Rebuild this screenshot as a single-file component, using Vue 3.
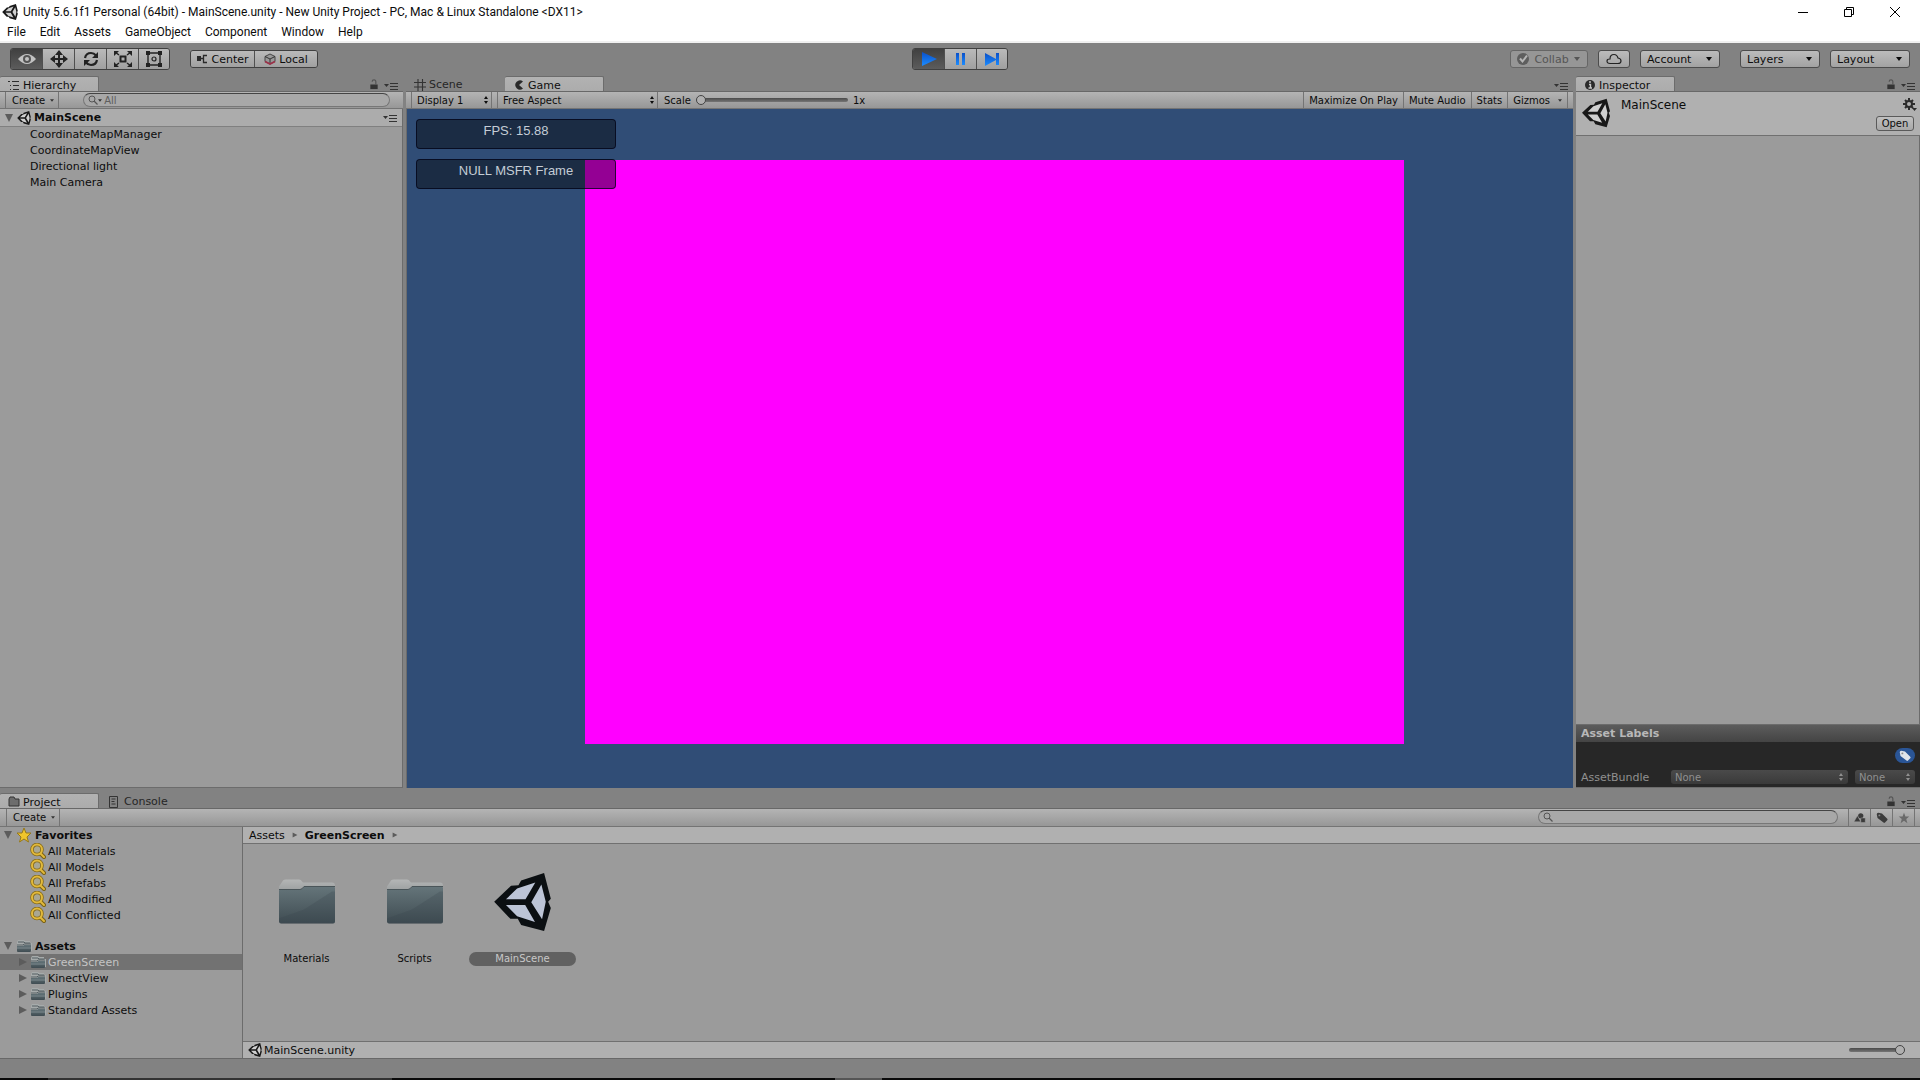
<script setup>
import { ref } from "vue";

const menus = ["File", "Edit", "Assets", "GameObject", "Component", "Window", "Help"];

const tools = [
  { id: "eye", label: "Hand" },
  { id: "move", label: "Move" },
  { id: "rotate", label: "Rotate" },
  { id: "scale", label: "Scale" },
  { id: "rect", label: "Rect" },
];
const activeTool = ref("eye");

const playControls = [
  { id: "play", label: "Play" },
  { id: "pause", label: "Pause" },
  { id: "step", label: "Step" },
];
const playing = ref(true);

const sceneObjects = [
  "CoordinateMapManager",
  "CoordinateMapView",
  "Directional light",
  "Main Camera",
];

const gameToggles = ["Maximize On Play", "Mute Audio", "Stats"];

const favorites = [
  "All Materials",
  "All Models",
  "All Prefabs",
  "All Modified",
  "All Conflicted",
];

const folders = ["GreenScreen", "KinectView", "Plugins", "Standard Assets"];
const selectedFolder = ref("GreenScreen");

const items = [
  { name: "Materials", icon: "folder-big" },
  { name: "Scripts", icon: "folder-big" },
  { name: "MainScene", icon: "unity-big" },
];
const selectedItem = ref("MainScene");

const hierarchySearch = ref("");
const projectSearch = ref("");
const gameScale = ref(0);
const iconSize = ref(100);
</script>

<template>
  <svg class="defs" aria-hidden="true">
    <defs>
      <linearGradient id="g-folder" x1="0" y1="0" x2="0" y2="1">
        <stop offset="0" stop-color="#65757a" />
        <stop offset="1" stop-color="#3f4c52" />
      </linearGradient>
      <linearGradient id="g-back" x1="0" y1="0" x2="0" y2="1">
        <stop offset="0" stop-color="#b4b6b6" />
        <stop offset="1" stop-color="#8b9091" />
      </linearGradient>
      <linearGradient id="g-blue" x1="0" y1="0" x2="0" y2="1">
        <stop offset="0" stop-color="#0b50c8" />
        <stop offset="1" stop-color="#1c8cff" />
      </linearGradient>
    </defs>
    <symbol id="unity" viewBox="0 0 168 172">
      <path d="M0 85 50 38 72 36 80 22 148 0 168 76 160 85 168 104 148 172 80 154 70 136 48 136Z" fill="#181818" />
      <path d="M35 78 68 46 122 28 93 78ZM35 95H92L121 145 68 128ZM110 87 140 34 153 85 142 137Z" fill="#d0d0d0" />
    </symbol>
    <symbol id="unity-big" viewBox="0 0 168 172">
      <path d="M0 85 50 38 72 36 80 22 148 0 168 76 160 85 168 104 148 172 80 154 70 136 48 136Z" fill="#0b0f12" />
      <path d="M35 78 68 46 122 28 93 78ZM35 95H92L121 145 68 128ZM110 87 140 34 153 85 142 137Z" fill="#bcc4d6" />
    </symbol>
    <symbol id="folder-big" viewBox="0 0 57 47">
      <path d="M1 8 5 2Q6 1 8 1H21Q23 1 24 3L25 4H54Q57 4 57 7V20H1Z" fill="url(#g-back)" />
      <path d="M1 12Q1 11 3 11H22Q24 11 26 8H56Q57 8 57 10V43Q57 45 55 45H3Q1 45 1 43Z" fill="url(#g-folder)" />
      <path d="M1 11H22Q24 11 26 8H57" fill="none" stroke="#4a5559" stroke-width="1" />
      <path d="M26 31 54 13H57V43Q57 45 55 45H3L1 43V40Z" fill="#37444a" opacity=".25" />
    </symbol>
    <symbol id="folder" viewBox="0 0 16 14">
      <path d="M1 3 2 1H8L9 2H14V4H16V12H1Z" fill="#a6abab" />
      <path d="M2 3H8L9 4H14M1 6H7L8 5H15" fill="none" stroke="#555f63" stroke-width="1" />
      <path d="M1 7H7L8 6H15V12Q15 13 14 13H2Q1 13 1 12Z" fill="url(#g-folder)" />
      <path d="M1 9H15" stroke="#7d898d" stroke-width="1" />
    </symbol>
    <symbol id="folder-tab" viewBox="0 0 12 12">
      <path d="M1 3 2 1H6L7 3H11V10H1Z" fill="#6d6d6d" stroke="#333" />
    </symbol>
    <symbol id="lens" viewBox="0 0 16 16">
      <path d="M10 10 14 14" stroke="#7a6114" stroke-width="4" stroke-linecap="round" />
      <circle cx="7" cy="6.5" r="5" fill="#a9a793" stroke="#856b1a" stroke-width="3.6" />
      <circle cx="7" cy="6.5" r="5" fill="none" stroke="#e2b93b" stroke-width="2" />
      <path d="M11 11 14 14" stroke="#e2b93b" stroke-width="2" stroke-linecap="round" />
    </symbol>
    <symbol id="star" viewBox="0 0 16 16">
      <path d="M8 1 10 6 15 6 11 10 12.5 15 8 12 3.5 15 5 10 1 6 6 6Z" fill="#f0c52c" stroke="#96781a" stroke-width="1" />
    </symbol>
    <symbol id="star-flat" viewBox="0 0 16 16">
      <path d="M8 1 9.900 6H15L11 9.400 12.500 15 8 11.700 3.500 15 5 9.400 1 6H6.100Z" fill="#6a6a6a" />
    </symbol>
    <symbol id="shapes" viewBox="0 0 16 16">
      <circle cx="9" cy="5" r="3.5" fill="#3b3b3b" />
      <path d="M0 13 4.500 5 9 13ZM9 8H15V14H9Z" fill="#3b3b3b" stroke="#a5a5a5" stroke-width=".6" />
    </symbol>
    <symbol id="tag" viewBox="0 0 16 16">
      <path d="M1 3Q1 1 3 1L8 2 15 9Q16 10 15 11L12 14Q11 15 10 14L2 8Z" fill="currentColor" />
      <circle cx="4.5" cy="4.500" r="1.300" fill="#888" />
    </symbol>
    <symbol id="lock" viewBox="0 0 10 12">
      <path d="M1 6H9V11H1Z" fill="#333" />
      <path d="M7 6V3Q7 1 5 1Q3 1 3 3" fill="none" stroke="#555" stroke-width="1.3" />
    </symbol>
    <symbol id="options" viewBox="0 0 14 8">
      <path d="M0 2H5L2.500 5Z" fill="#333" />
      <path d="M6 1.500H14M6 4.500H14M6 7.500H14" stroke="#333" stroke-width="1" />
    </symbol>
    <symbol id="list" viewBox="0 0 12 12">
      <path d="M0 2.500H2M4 2.500H11M2 6.500H3M5 6.500H11M2 10.500H3M5 10.500H11" stroke="#2c2c2c" stroke-width="1.2" />
    </symbol>
    <symbol id="grid" viewBox="0 0 12 12">
      <path d="M4 0V12M8.500 0V12M0 3.500H12M0 8H12" stroke="#333" stroke-width="1.1" />
    </symbol>
    <symbol id="pac" viewBox="0 0 12 12">
      <path d="M10 2.500A4.600 4.600 0 1 0 10 9.500L6 6Z" fill="#2a2a2a" />
    </symbol>
    <symbol id="info" viewBox="0 0 12 12">
      <circle cx="6" cy="6" r="5" fill="#2a2a2a" />
      <path d="M6 2V4M5 5.500H6.500V9M4.500 9H8" fill="none" stroke="#c8c8c8" stroke-width="1.4" />
    </symbol>
    <symbol id="console" viewBox="0 0 12 12">
      <path d="M.5 .5H8.500V11.500H.5Z" fill="none" stroke="#333" />
      <path d="M2.500 3H6.500M2.500 5.500H5.500M2.500 8H6.500" stroke="#333" />
    </symbol>
    <symbol id="gear" viewBox="0 0 14 14">
      <circle cx="6" cy="6" r="3" fill="none" stroke="#2c2c2c" stroke-width="2" />
      <path d="M6 0V3M6 9V12M0 6H3M9 6H12M2 2 4 4M8 8 10 10M10 2 8 4M2 10 4 8" stroke="#2c2c2c" stroke-width="2" />
      <path d="M9 10H14L11.500 13Z" fill="#2c2c2c" />
    </symbol>
    <symbol id="eye" viewBox="0 0 20 18">
      <path d="M1 9Q10 -1 19 9Q10 19 1 9Z" fill="#c2c2c2" />
      <circle cx="10" cy="9" r="4" fill="#555" />
      <circle cx="10" cy="9" r="2" fill="#c2c2c2" />
    </symbol>
    <symbol id="move" viewBox="0 0 20 18">
      <path d="M10 1V17M2 9H18" stroke="#222" stroke-width="2" />
      <path d="M10 0 14 5H6ZM10 18 6 13H14ZM1 9 6 5V13ZM19 9 14 13V5Z" fill="#222" />
    </symbol>
    <symbol id="rotate" viewBox="0 0 20 18">
      <path d="M4 8Q5 3 10 3Q13 3 15 5.500M16 10Q15 15 10 15Q7 15 5 12.500" fill="none" stroke="#222" stroke-width="2.2" />
      <path d="M17 2V8H11ZM3 16V10H9Z" fill="#222" />
    </symbol>
    <symbol id="scale" viewBox="0 0 20 18">
      <path d="M7.500 6.500H12.500V11.500H7.500Z" fill="none" stroke="#222" stroke-width="2" />
      <path d="M2 2 6 5M18 2 14 5M2 16 6 13M18 16 14 13" stroke="#222" stroke-width="1.5" />
      <path d="M1 1H6L1 6ZM19 1V6L14 1ZM1 17V12L6 17ZM19 17H14L19 12Z" fill="#222" />
    </symbol>
    <symbol id="rect" viewBox="0 0 20 18">
      <path d="M4 3H16V15H4Z" fill="none" stroke="#222" stroke-width="1.4" />
      <path d="M2 1H6V5H2ZM14 1H18V5H14ZM2 13H6V17H2ZM14 13H18V17H14Z" fill="#222" />
      <circle cx="10" cy="9" r="2" fill="none" stroke="#222" stroke-width="1.2" />
    </symbol>
    <symbol id="pivot" viewBox="0 0 12 12">
      <path d="M1 3H5V8H1Z" fill="#2a2a2a" />
      <path d="M5 5.500H8M11 2.500H7.500V9.500H11" fill="none" stroke="#2a2a2a" stroke-width="1.3" />
    </symbol>
    <symbol id="cube" viewBox="0 0 12 12">
      <path d="M6 1 11 3.500V8.500L6 11 1 8.500V3.500Z" fill="#999" stroke="#444" />
      <path d="M1 3.500 6 6 11 3.500M6 6V11" fill="none" stroke="#333" />
      <path d="M1 8.500 6 11 11 8.500" fill="none" stroke="#9c3048" stroke-width="1.8" />
    </symbol>
    <symbol id="play" viewBox="0 0 20 18">
      <path d="M3 2 18 9 3 16Z" fill="url(#g-blue)" />
    </symbol>
    <symbol id="pause" viewBox="0 0 20 18">
      <path d="M5 3H8V15H5ZM11 3H14V15H11Z" fill="url(#g-blue)" />
    </symbol>
    <symbol id="step" viewBox="0 0 20 18">
      <path d="M3 3 14 9V3H17V15H14V10L3 16Z" fill="url(#g-blue)" />
    </symbol>
    <symbol id="cloud" viewBox="0 0 16 12">
      <path d="M4 10.500Q1 10.500 1 8Q1 6 4 6Q4 1.500 8 1.500Q11 1.500 12 5Q15 5.500 15 8Q15 10.500 12 10.500Z" fill="none" stroke="#222" stroke-width="1.2" />
    </symbol>
    <symbol id="check" viewBox="0 0 12 12">
      <circle cx="6" cy="6" r="6" fill="#5e5e5e" />
      <path d="M3 5.500 5.500 8.500 10 2.500" fill="none" stroke="#b5b5b5" stroke-width="2" />
    </symbol>
    <symbol id="search" viewBox="0 0 10 10">
      <circle cx="4" cy="4" r="3" fill="none" stroke="#555" />
      <path d="M6 6 9.500 9.500" stroke="#555" stroke-width="1.3" />
    </symbol>
    <symbol id="down" viewBox="0 0 6 4">
      <path d="M0 0H6L3 4Z" fill="currentColor" />
    </symbol>
    <symbol id="updown" viewBox="0 0 6 8">
      <path d="M1 3H5L3 0ZM1 5H5L3 8Z" fill="currentColor" />
    </symbol>
    <symbol id="fold-open" viewBox="0 0 10 10">
      <path d="M1 1H9L5 9Z" fill="#5c5c5c" />
    </symbol>
    <symbol id="fold-closed" viewBox="0 0 10 10">
      <path d="M1 1V9L9 5Z" fill="#5c5c5c" />
    </symbol>
  </svg>

  <div class="editor">
    <header class="titlebar">
      <svg class="i16"><use href="#unity" /></svg>
      <h1>Unity 5.6.1f1 Personal (64bit) - MainScene.unity - New Unity Project - PC, Mac &amp; Linux Standalone &lt;DX11&gt;</h1>
      <div class="window-btns">
        <button aria-label="Minimize">
          <svg class="i12" viewBox="0 0 12 12"><path d="M1 6.500H11" stroke="#000" /></svg>
        </button>
        <button aria-label="Restore">
          <svg class="i12" viewBox="0 0 12 12"><path d="M1.500 3.500H8.500V10.500H1.500ZM3.500 3V1.500H10.500V8.500H9" fill="none" stroke="#000" /></svg>
        </button>
        <button aria-label="Close">
          <svg class="i12" viewBox="0 0 12 12"><path d="M1 1 11 11M11 1 1 11" stroke="#000" /></svg>
        </button>
      </div>
    </header>

    <nav class="menubar">
      <button v-for="menu in menus" :key="menu">{{ menu }}</button>
    </nav>

    <div class="toolbar">
      <div class="side">
        <div class="group tall">
          <button
            v-for="tool in tools"
            :key="tool.id"
            :aria-label="tool.label"
            :class="{ on: activeTool === tool.id }"
            @click="activeTool = tool.id"
          >
            <svg class="tool-icon"><use :href="'#' + tool.id" /></svg>
          </button>
        </div>
        <div class="group">
          <button><svg class="i12"><use href="#pivot" /></svg>Center</button>
          <button><svg class="i12"><use href="#cube" /></svg>Local</button>
        </div>
      </div>
      <div class="group tall">
        <button
          v-for="control in playControls"
          :key="control.id"
          :aria-label="control.label"
          :class="{ on: playing && control.id === 'play' }"
        >
          <svg class="tool-icon"><use :href="'#' + control.id" /></svg>
        </button>
      </div>
      <div class="side right">
        <button class="drop collab" disabled>
          <svg class="i12"><use href="#check" /></svg>Collab
          <svg class="arrow"><use href="#down" /></svg>
        </button>
        <button class="drop cloud" aria-label="Services">
          <svg class="cloud-icon"><use href="#cloud" /></svg>
        </button>
        <button class="drop">Account<svg class="arrow"><use href="#down" /></svg></button>
        <button class="drop layers">Layers<svg class="arrow"><use href="#down" /></svg></button>
        <button class="drop">Layout<svg class="arrow"><use href="#down" /></svg></button>
      </div>
    </div>

    <div class="upper">
      <section class="panel">
        <div class="tabs">
          <button class="tab active"><svg class="i12"><use href="#list" /></svg>Hierarchy</button>
          <div class="tab-tools">
            <svg class="lock"><use href="#lock" /></svg>
            <svg class="options"><use href="#options" /></svg>
          </div>
        </div>
        <div class="bar">
          <button class="create">Create<svg class="arrow small"><use href="#down" /></svg></button>
          <label class="search">
            <svg class="i10"><use href="#search" /></svg>
            <svg class="arrow small"><use href="#down" /></svg>
            <input v-model="hierarchySearch" type="text" placeholder="All" aria-label="Search hierarchy" />
          </label>
        </div>
        <div class="body">
          <div class="scene-row">
            <svg class="i10"><use href="#fold-open" /></svg>
            <svg class="i14"><use href="#unity" /></svg>
            <strong>MainScene</strong>
            <svg class="options"><use href="#options" /></svg>
          </div>
          <ul class="objects">
            <li v-for="obj in sceneObjects" :key="obj">{{ obj }}</li>
          </ul>
        </div>
      </section>

      <section class="panel">
        <div class="tabs">
          <button class="tab"><svg class="i12"><use href="#grid" /></svg>Scene</button>
          <button class="tab active"><svg class="i12"><use href="#pac" /></svg>Game</button>
          <div class="tab-tools">
            <svg class="options"><use href="#options" /></svg>
          </div>
        </div>
        <div class="bar">
          <div class="picker display">
            <select aria-label="Display"><option>Display 1</option></select>
            <svg class="updown"><use href="#updown" /></svg>
          </div>
          <div class="picker aspect">
            <select aria-label="Aspect"><option>Free Aspect</option></select>
            <svg class="updown"><use href="#updown" /></svg>
          </div>
          <label class="scale">
            Scale
            <input v-model="gameScale" class="slider" type="range" />
            1x
          </label>
          <div class="toggles">
            <button v-for="toggle in gameToggles" :key="toggle">{{ toggle }}</button>
            <button class="gizmos">Gizmos<svg class="arrow small"><use href="#down" /></svg></button>
          </div>
        </div>
        <div class="view">
          <div class="quad"></div>
          <div class="overlay">
            <div class="gui-box">FPS: 15.88</div>
            <div class="gui-box">NULL MSFR Frame</div>
          </div>
        </div>
      </section>

      <section class="panel">
        <div class="tabs">
          <button class="tab active"><svg class="i12"><use href="#info" /></svg>Inspector</button>
          <div class="tab-tools">
            <svg class="lock"><use href="#lock" /></svg>
            <svg class="options"><use href="#options" /></svg>
          </div>
        </div>
        <div class="inspector-head">
          <svg class="head-logo"><use href="#unity" /></svg>
          <h2>MainScene</h2>
          <div class="head-side">
            <svg class="i14"><use href="#gear" /></svg>
            <button class="open">Open</button>
          </div>
        </div>
        <div class="body"></div>
        <div class="labels-head">Asset Labels</div>
        <div class="labels">
          <button class="tag-btn" aria-label="Labels"><svg class="i12"><use href="#tag" /></svg></button>
          <div class="bundle">
            <label for="bundle">AssetBundle</label>
            <div class="dark-picker wide">
              <select id="bundle"><option>None</option></select>
              <svg class="updown"><use href="#updown" /></svg>
            </div>
            <div class="dark-picker">
              <select aria-label="Variant"><option>None</option></select>
              <svg class="updown"><use href="#updown" /></svg>
            </div>
          </div>
        </div>
      </section>
    </div>

    <section class="panel project">
      <div class="tabs">
        <button class="tab active"><svg class="i12"><use href="#folder-tab" /></svg>Project</button>
        <button class="tab console"><svg class="i12"><use href="#console" /></svg>Console</button>
        <div class="tab-tools">
          <svg class="lock"><use href="#lock" /></svg>
          <svg class="options"><use href="#options" /></svg>
        </div>
      </div>
      <div class="bar">
        <button class="create">Create<svg class="arrow small"><use href="#down" /></svg></button>
        <label class="search project-search">
          <svg class="i10"><use href="#search" /></svg>
          <input v-model="projectSearch" type="text" aria-label="Search project" />
        </label>
        <div class="filters">
          <button aria-label="Search by type"><svg class="i12"><use href="#shapes" /></svg></button>
          <button aria-label="Search by label"><svg class="i12"><use href="#tag" /></svg></button>
          <button aria-label="Save search"><svg class="i12"><use href="#star-flat" /></svg></button>
        </div>
      </div>
      <div class="project-body">
        <div class="tree">
          <div class="row root">
            <svg class="i10"><use href="#fold-open" /></svg>
            <svg class="i16"><use href="#star" /></svg>
            <strong>Favorites</strong>
          </div>
          <div v-for="fav in favorites" :key="fav" class="row fav">
            <svg class="i16"><use href="#lens" /></svg>
            <span>{{ fav }}</span>
          </div>
          <div class="row root assets">
            <svg class="i10"><use href="#fold-open" /></svg>
            <svg class="i16"><use href="#folder" /></svg>
            <strong>Assets</strong>
          </div>
          <div
            v-for="folder in folders"
            :key="folder"
            class="row child"
            :class="{ selected: selectedFolder === folder }"
            @click="selectedFolder = folder"
          >
            <svg class="i10"><use href="#fold-closed" /></svg>
            <svg class="i16"><use href="#folder" /></svg>
            <span>{{ folder }}</span>
          </div>
        </div>
        <div class="browser">
          <div class="crumbs">
            <span>Assets</span>
            <svg class="crumb-arrow"><use href="#fold-closed" /></svg>
            <strong>GreenScreen</strong>
            <svg class="crumb-arrow"><use href="#fold-closed" /></svg>
          </div>
          <div class="items">
            <button
              v-for="item in items"
              :key="item.name"
              class="item"
              :class="{ selected: selectedItem === item.name }"
              @click="selectedItem = item.name"
            >
              <svg class="item-icon"><use :href="'#' + item.icon" /></svg>
              <span>{{ item.name }}</span>
            </button>
          </div>
          <div class="footer">
            <svg class="i14"><use href="#unity" /></svg>
            <span>MainScene.unity</span>
            <input v-model="iconSize" class="slider size" type="range" aria-label="Icon size" />
          </div>
        </div>
      </div>
    </section>

    <div class="status"></div>
    <div class="taskbar"></div>
  </div>
</template>

<style>
body {
  margin: 0;
  background: #828282;
}
</style>

<style scoped>
.defs {
  position: absolute;
  width: 0;
  height: 0;
}

.editor {
  display: flex;
  flex-direction: column;
  height: 100vh;
  overflow: hidden;
  background: #828282;
  color: #0c0c0c;
  font-family: "DejaVu Sans", Verdana, sans-serif;
  font-size: 11px;
}

.editor * {
  box-sizing: border-box;
}

button,
input,
select {
  margin: 0;
  padding: 0;
  border: none;
  outline: none;
  background: none;
  color: inherit;
  font: inherit;
}

select {
  appearance: none;
  width: 100%;
}

svg {
  flex: none;
  display: block;
}

.i10 {
  width: 10px;
  height: 10px;
}

.i12 {
  width: 12px;
  height: 12px;
}

.i14 {
  width: 14px;
  height: 14px;
}

.i16 {
  width: 16px;
  height: 16px;
}

.arrow {
  width: 6px;
  height: 4px;
}

.arrow.small {
  width: 4px;
  height: 3px;
  color: #333;
}

.updown {
  width: 6px;
  height: 8px;
}

/* window chrome */
.titlebar {
  display: flex;
  align-items: center;
  height: 23px;
  padding-left: 2px;
  background: #fff;
  font-family: Roboto, "Open Sans", sans-serif;
}

.titlebar h1 {
  margin: 0 0 0 5px;
  font-size: 12px;
  font-weight: 400;
}

.window-btns {
  display: flex;
  margin-left: auto;
}

.window-btns button {
  display: flex;
  justify-content: center;
  width: 46px;
}

.window-btns button:last-child {
  margin-right: 2px;
}

.menubar {
  display: flex;
  gap: 14px;
  height: 20px;
  padding-left: 7px;
  border-bottom: 2px solid #f0f0f0;
  background: #fff;
  font-family: Roboto, "Open Sans", sans-serif;
  font-size: 12px;
}

/* main toolbar */
.toolbar {
  display: grid;
  grid-template-columns: 1fr auto 1fr;
  align-items: center;
  height: 33px;
  padding: 0 10px 1px;
}

.side {
  display: flex;
  align-items: center;
  gap: 20px;
}

.side.right {
  justify-content: flex-end;
  gap: 10px;
}

.group {
  display: flex;
  border: 1px solid #404040;
  border-radius: 3px;
  overflow: hidden;
}

.group button {
  display: flex;
  align-items: center;
  justify-content: center;
  gap: 3px;
  width: 63px;
  height: 16px;
  background: linear-gradient(#bababa, #a0a0a0);
}

.group button + button {
  border-left: 1px solid #505050;
}

.group.tall button {
  width: 32px;
  height: 20px;
}

.group.tall button:first-child,
.group.tall button:last-child {
  width: 31px;
}

.group.tall .on {
  background: linear-gradient(#404040, #5c5c5c);
}

.tool-icon {
  width: 20px;
  height: 18px;
}

.drop {
  display: flex;
  align-items: center;
  justify-content: space-between;
  width: 80px;
  height: 18px;
  padding: 0 7px 0 6px;
  border: 1px solid #4c4c4c;
  border-radius: 3px;
  background: linear-gradient(#bcbcbc, #a2a2a2);
}

.drop.collab {
  width: 78px;
  border-color: #666;
  background: #969696;
  color: #555;
}

.drop.cloud {
  justify-content: center;
  width: 32px;
}

.cloud-icon {
  width: 16px;
  height: 12px;
}

.drop.layers {
  margin-left: 10px;
}

/* panels */
.upper {
  display: grid;
  flex: 1;
  grid-template-columns: 403fr 1167fr 344fr;
  gap: 3px;
  min-height: 0;
}

.panel {
  display: flex;
  flex-direction: column;
  min-width: 0;
}

.tabs {
  display: flex;
  height: 16px;
  border-bottom: 1px solid #686868;
}

.tab {
  display: flex;
  align-items: center;
  gap: 3px;
  width: 99px;
  height: 15px;
  padding: 2px 8px 0;
  color: #262626;
}

.tab.active {
  border-right: 1px solid #6c6c6c;
  border-top: 1px solid #6c6c6c;
  border-radius: 2px 2px 0 0;
  background: linear-gradient(#b2b2b2, #acacac);
  color: #101010;
}

.tab.console {
  margin-left: 2px;
}

.tab-tools {
  display: flex;
  align-items: flex-end;
  gap: 5px;
  margin-left: auto;
  padding: 0 5px 1px 0;
}

.lock {
  width: 10px;
  height: 11px;
}

.options {
  width: 14px;
  height: 8px;
}

.bar {
  display: flex;
  align-items: stretch;
  height: 17px;
  padding-left: 5px;
  border-bottom: 1px solid #747474;
  background: linear-gradient(#b4b4b4, #979797);
  font-size: 10px;
}

.create {
  display: flex;
  align-items: center;
  gap: 5px;
  padding: 0 4px 0 6px;
  border: solid #747474;
  border-width: 0 1px;
}

.search {
  display: flex;
  flex: 1;
  align-items: center;
  height: 14px;
  margin: 1px 13px 1px 24px;
  padding-left: 4px;
  border: 1px solid #777;
  border-top-color: #444;
  border-radius: 7px;
  background: #a8a8a8;
}

.search input {
  flex: 1;
  min-width: 0;
  padding-left: 2px;
}

.search input::placeholder {
  color: #5e5e5e;
}

.body {
  flex: 1;
  border-right: 1px solid #6c6c6c;
  border-bottom: 1px solid #6c6c6c;
  background: #9b9b9b;
}

.scene-row {
  display: flex;
  align-items: center;
  height: 18px;
  padding: 0 5px 0 4px;
  border-bottom: 1px solid #808080;
  background: #acacac;
}

.scene-row .i14 {
  margin: 0 3px;
}

.scene-row .options {
  margin-left: auto;
}

.objects {
  margin: 0;
  padding: 0 0 0 30px;
  list-style: none;
  line-height: 16px;
}

/* game view */
.picker {
  display: flex;
  align-items: center;
  padding: 0 2px 0 5px;
  border: solid #747474;
  border-width: 0 1px;
}

.picker.display {
  width: 81px;
}

.picker.aspect {
  width: 161px;
  margin-left: 5px;
}

.scale {
  display: flex;
  align-items: center;
  gap: 5px;
  padding-left: 6px;
}

.slider {
  appearance: none;
  width: 152px;
  height: 12px;
}

.slider::-webkit-slider-runnable-track {
  height: 4px;
  border-radius: 2px;
  background: linear-gradient(#4a4a4a, #757575);
}

.slider::-webkit-slider-thumb {
  appearance: none;
  width: 10px;
  height: 10px;
  margin-top: -3px;
  border: 1px solid #444;
  border-radius: 50%;
  background: #b0b0b0;
}

.toggles {
  display: flex;
  margin-left: auto;
  margin-right: 5px;
  border-right: 1px solid #747474;
}

.toggles button {
  padding: 0 5px;
  border-left: 1px solid #747474;
}

.toggles .gizmos {
  display: flex;
  align-items: center;
  gap: 8px;
}

.view {
  position: relative;
  flex: 1;
  padding: 10px 9px;
  border-left: 1px solid #6c6c6c;
  background: #304d76;
}

.quad {
  position: absolute;
  top: 7.5%;
  left: 15.3%;
  width: 70.2%;
  height: 86%;
  background: #ff00ff;
}

.overlay {
  position: relative;
  display: flex;
  flex-direction: column;
  gap: 10px;
}

.gui-box {
  width: 200px;
  height: 30px;
  padding-top: 3px;
  border: 1px solid rgba(0, 0, 20, 0.7);
  border-radius: 4px;
  background: rgba(0, 0, 0, 0.42);
  color: #c4ccd6;
  font-family: "Liberation Sans", Arial, sans-serif;
  font-size: 13px;
  line-height: 15px;
  text-align: center;
}

/* inspector */
.inspector-head {
  display: flex;
  height: 44px;
  padding: 6px 3px 0 6px;
  border-bottom: 1px solid #707070;
  background: #b0b0b0;
}

.head-logo {
  width: 28px;
  height: 30px;
}

.inspector-head h2 {
  margin: 0 0 0 11px;
  font-size: 12px;
  font-weight: 400;
  line-height: 14px;
}

.head-side {
  display: flex;
  flex-direction: column;
  align-items: flex-end;
  gap: 4px;
  margin-left: auto;
}

.open {
  width: 38px;
  height: 15px;
  margin-right: 3px;
  border: 1px solid #5a5a5a;
  border-radius: 3px;
  background: linear-gradient(#c0c0c0, #a8a8a8);
  font-size: 10px;
}

.labels-head {
  height: 17px;
  padding-left: 5px;
  background: linear-gradient(#5c5c5c, #444);
  color: #b8b8b8;
  font-weight: 700;
  line-height: 17px;
}

.labels {
  display: flex;
  flex-direction: column;
  align-items: flex-end;
  gap: 7px;
  padding: 6px 5px 3px;
  border-bottom: 1px solid #6c6c6c;
  background: #272727;
}

.tag-btn {
  display: flex;
  align-items: center;
  justify-content: center;
  width: 20px;
  height: 15px;
  border-radius: 8px;
  background: #2a5596;
  color: #e0e4ea;
}

.bundle {
  display: flex;
  align-items: center;
  gap: 7px;
  width: 100%;
  color: #909090;
}

.bundle label {
  width: 83px;
}

.dark-picker {
  display: flex;
  align-items: center;
  width: 60px;
  height: 14px;
  padding: 0 4px;
  border-radius: 3px;
  background: linear-gradient(#4a4a4a, #3a3a3a);
  font-size: 10px;
}

.dark-picker.wide {
  flex: 1;
}

/* project */
.project {
  height: calc(25vh + 1px);
  padding-top: 5px;
}

.project .create {
  margin-left: 1px;
}

.project .bar {
  height: 18px;
}

.project-search {
  flex: none;
  width: 300px;
  margin-left: auto;
  margin-right: 10px;
}

.filters {
  display: flex;
  margin-right: 5px;
  border-right: 1px solid #747474;
}

.filters button {
  display: flex;
  align-items: center;
  justify-content: center;
  width: 22px;
  border-left: 1px solid #747474;
  color: #3b3b3b;
}

.project-body {
  display: flex;
  flex: 1;
  min-height: 0;
  border-bottom: 1px solid #686868;
}

.tree {
  width: 243px;
  border-right: 1px solid #6c6c6c;
  background: #9b9b9b;
}

.row {
  display: flex;
  align-items: center;
  gap: 2px;
  height: 16px;
}

.root {
  gap: 3px;
  padding-left: 3px;
}

.assets {
  margin-top: 15px;
}

.fav {
  padding-left: 30px;
}

.child {
  padding-left: 18px;
}

.row.selected {
  background: #727272;
  color: #c4c4c4;
}

.browser {
  display: flex;
  flex: 1;
  flex-direction: column;
}

.crumbs {
  display: flex;
  align-items: center;
  gap: 7px;
  height: 17px;
  padding-left: 6px;
  border-bottom: 1px solid #707070;
  background: #b0b0b0;
}

.crumb-arrow {
  width: 6px;
  height: 6px;
}

.items {
  display: flex;
  flex: 1;
  gap: 1px;
  padding: 29px 10px 0;
  background: #9b9b9b;
}

.item {
  display: flex;
  flex-direction: column;
  align-items: center;
  gap: 21px;
  width: 107px;
  height: 94px;
  font-size: 10px;
}

.item-icon {
  width: 57px;
  height: 58px;
}

.item span {
  width: 100%;
  height: 14px;
  border-radius: 7px;
  line-height: 14px;
}

.item.selected span {
  background: #616161;
  color: #c8c8c8;
}

.footer {
  display: flex;
  align-items: center;
  gap: 2px;
  height: 17px;
  padding: 0 15px 0 5px;
  border-top: 1px solid #707070;
  background: #b0b0b0;
}

.size {
  width: 56px;
  margin-left: auto;
}

.status {
  height: 19px;
}

.taskbar {
  height: 2px;
  background: linear-gradient(
    90deg,
    #0a0a0a 0 48px,
    #333 48px 392px,
    #0a0a0a 392px 835px,
    #555 835px 882px,
    #0a0a0a 882px
  );
}
</style>
